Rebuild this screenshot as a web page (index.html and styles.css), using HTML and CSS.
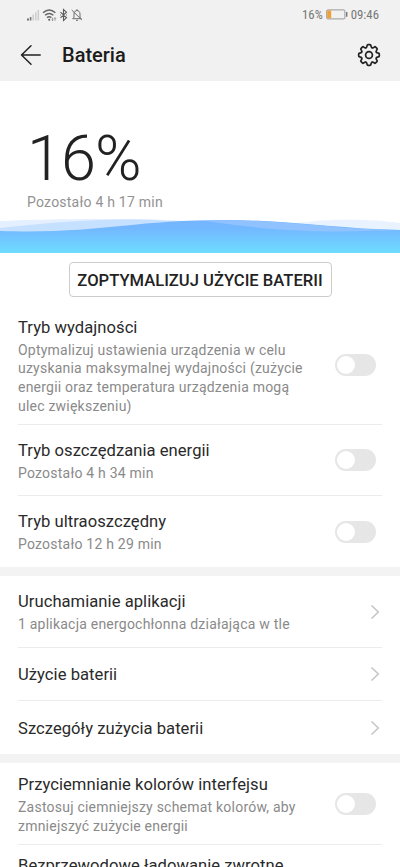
FILE: index.html
```html
<!DOCTYPE html>
<html lang="pl">
<head>
<meta charset="utf-8">
<title>Bateria</title>
<link rel="stylesheet" href="styles.css">
</head>
<body>
<header class="top">
  <div class="status">
    <svg class="status-icons" width="60" height="14" viewBox="0 0 60 14" fill="none">
      <path d="M2 10.500v2" stroke="#555" stroke-width="1.600"/>
      <path d="M4.600 9v3.500" stroke="#777" stroke-width="1.600"/>
      <path d="M7.200 6.500v6M9.800 4.300v8.200M12.300 2v10.500" stroke="#ccc" stroke-width="1.500"/>
      <path d="M17 4.700q6.200-5.600 12.400 0M19 7.200q4.200-3.500 8.400 0M21 9.600q2.200-1.700 4.400 0" stroke="#666" stroke-width="1.400"/>
      <circle cx="23.200" cy="11.700" r="1" fill="#555"/><path d="M26.500 9.700v3m-1-1l1 1 1-1M29 12.700v-3m-1 1l1-1 1 1" stroke="#777" stroke-width=".7"/>
      <path d="M34.500 4.200l6 5.600-3 2.700V1.500l3 2.700-6 5.600M34 7h.8M40 7h.8" stroke="#5c5c5c" stroke-width="1.100"/>
      <path d="M46.700 10.700h8.500l-1.200-1.500V6c0-4.600-6-4.600-6 0v3.200zM50 12.300h2M51 1.200v1.300M45.700 2l10.200 10" stroke="#6c6c6c" stroke-width="1"/>
    </svg>
    <div class="status-right">
      <span class="pct">16%</span>
      <svg class="batt" width="22" height="11" viewBox="0 0 22 11"><rect x=".7" y=".9" width="18.200" height="9" rx="1" fill="none" stroke="#999"/><rect x="1.200" y="1.400" width="4" height="8" fill="#eea13a"/><path d="M20.700 3v4.800" stroke="#777" stroke-width="1.400"/></svg>
      <span class="clock">09:46</span>
    </div>
  </div>
  <div class="bar">
    <svg width="22" height="22" viewBox="0 0 22 22" fill="none" stroke="#222" stroke-width="1.500" stroke-linecap="round" stroke-linejoin="round"><path d="M11 1.700L1.500 11l9.500 9.300M1.500 11h18.700"/></svg>
    <h1>Bateria</h1>
    <svg class="gear" width="24" height="24" viewBox="-12 -12 24 24" fill="none" stroke="#222" stroke-width="1.700" stroke-linecap="round">
      <defs><path id="tooth" d="M-3.020-7.300C-2.100-7.600-2-8.300-1.900-9.300Q-1.800-10.300-.9-10.300H.9Q1.800-10.300 1.900-9.300C2-8.300 2.100-7.600 3.020-7.300"/></defs>
      <use href="#tooth"/><use href="#tooth" transform="rotate(45)"/><use href="#tooth" transform="rotate(90)"/><use href="#tooth" transform="rotate(135)"/><use href="#tooth" transform="rotate(180)"/><use href="#tooth" transform="rotate(225)"/><use href="#tooth" transform="rotate(270)"/><use href="#tooth" transform="rotate(315)"/>
      <circle r="3.400"/>
    </svg>
  </div>
</header>
<section class="hero">
  <div class="level">16%</div>
  <div class="remaining">Pozostało 4 h 17 min</div>
  <svg class="wave" width="400" height="38" viewBox="0 0 400 38">
    <defs><linearGradient id="sea" x1="0" y1="4" x2="0" y2="38" gradientUnits="userSpaceOnUse"><stop offset="0" stop-color="#76b3fe"/><stop offset=".3" stop-color="#72b9ff"/><stop offset="1" stop-color="#6edcfe"/></linearGradient></defs>
    <path d="M0 6C50 4 85 4 120 4C160 4 185 6 200 7L180 16H0z" fill="#e4f0ff"/>
    <path d="M270 13C310 3 365 3 400 8V20H270z" fill="#e9f3ff"/>
    <path d="M0 13C45 8 90 4 135 4.500C155 4.500 175 6 195 7V20H0z" fill="#c6e0ff"/>
    <path d="M0 16C100 19 130 5 225 5C290 5 340 14 400 15V38H0z" fill="url(#sea)"/>
    <path d="M205 6C225 4.500 250 5 290 8C330 11 360 15 400 15C300 19 265 14 205 6z" fill="#8fc2ff"/>
  </svg>
</section>
<div class="action"><button>ZOPTYMALIZUJ UŻYCIE BATERII</button></div>
<main>
  <section class="group">
    <div class="row r1"><div class="text"><h2>Tryb wydajności</h2><p>Optymalizuj ustawienia urządzenia w celu<br>uzyskania maksymalnej wydajności (zużycie<br>energii oraz temperatura urządzenia mogą<br>ulec zwiększeniu)</p></div><i class="switch"></i></div>
    <div class="row r2"><div class="text"><h2>Tryb oszczędzania energii</h2><p>Pozostało 4 h 34 min</p></div><i class="switch"></i></div>
    <div class="row r3"><div class="text"><h2>Tryb ultraoszczędny</h2><p>Pozostało 12 h 29 min</p></div><i class="switch"></i></div>
  </section>
  <section class="group">
    <div class="row r4"><div class="text"><h2>Uruchamianie aplikacji</h2><p>1 aplikacja energochłonna działająca w tle</p></div><svg class="chev" width="10" height="16" viewBox="0 0 10 16"><path d="M1.500 1.500L8.300 8l-6.800 6.500"/></svg></div>
    <div class="row r5"><div class="text"><h2>Użycie baterii</h2></div><svg class="chev" width="10" height="16" viewBox="0 0 10 16"><path d="M1.500 1.500L8.300 8l-6.800 6.500"/></svg></div>
    <div class="row r6"><div class="text"><h2>Szczegóły zużycia baterii</h2></div><svg class="chev" width="10" height="16" viewBox="0 0 10 16"><path d="M1.500 1.500L8.300 8l-6.800 6.500"/></svg></div>
  </section>
  <section class="group">
    <div class="row r7"><div class="text"><h2>Przyciemnianie kolorów interfejsu</h2><p>Zastosuj ciemniejszy schemat kolorów, aby<br>zmniejszyć zużycie energii</p></div><i class="switch"></i></div>
    <div class="row r8"><div class="text"><h2>Bezprzewodowe ładowanie zwrotne</h2></div></div>
  </section>
</main>
</body>
</html>
```
FILE: styles.css
```css
* { box-sizing: border-box; }
body { margin: 0; height: 867px; overflow: hidden; background: #fff; font-family: Roboto, sans-serif; color: #2a2a2a; }
h1, h2, p { margin: 0; font-weight: 400; }
svg { display: block; flex: none; }
.top { height: 81px; background: #f1f1f1; }
.status { height: 28px; padding: 1px 21px 0 26px; display: flex; align-items: center; justify-content: space-between; }
.status-right { display: flex; align-items: center; font-family: "Roboto Condensed", Roboto, sans-serif; font-size: 12.8px; color: #777; }
.batt { margin: 0 3px 0 3px; }
.bar { height: 53px; padding: 0 19px 0 20px; display: flex; align-items: center; }
.bar h1 { margin-left: 20px; padding-top: 1px; font-size: 20px; line-height: 24px; font-weight: 500; color: #1c1c1c; }
.gear { margin-left: auto; }
.hero { height: 172px; display: flex; flex-direction: column; }
.level { margin: 45px 0 0 27px; height: 66px; line-height: 66px; font-size: 63px; font-weight: 300; color: #222; letter-spacing: -.9px; }
.remaining { margin-left: 27px; height: 20px; line-height: 20px; font-size: 14px; letter-spacing: .23px; color: #929292; }
.wave { margin-top: auto; }
.action { display: flex; justify-content: center; padding-top: 9px; }
button { width: 263px; height: 35px; padding: 2px 0 0; border: 1px solid #ccc; border-radius: 4px; background: #fff; font: 500 16.6px/31px Roboto, sans-serif; color: #222; white-space: nowrap; }
.group + .group { border-top: 9px solid #f3f3f3; }
.row { margin: 0 18px; display: flex; align-items: center; justify-content: space-between; border-bottom: 1px solid #ececec; }
.row:last-child { border-bottom: 0; }
.text { white-space: nowrap; }
h2 { font-size: 16.6px; line-height: 24px; letter-spacing: .04px; }
p { padding-top: 1px; margin-bottom: -1px; font-size: 14px; line-height: 18.6px; letter-spacing: .22px; color: #8a8a8a; }
.r1 { height: 128px; }
.r1 .text, .r1 .switch { margin-top: 9px; }
.r2 { height: 71px; }
.r3 { height: 71px; }
.r4 { height: 72px; }
.r5 { height: 53px; }
.r5 .text { padding-top: 1px; }
.r6 .text { padding-top: 2px; }
.r6 { height: 53px; }
.r7 { height: 82px; }
.r8 { height: 54px; align-items: flex-start; padding-top: 9px; }
.switch { flex: none; width: 41px; height: 22px; margin-right: 6px; border-radius: 11px; background: #e6e6e6; padding: 2px; }
.switch::before { content: ""; display: block; width: 18px; height: 18px; border-radius: 50%; background: #fff; }
.chev { margin-right: 2px; fill: none; stroke: #c4c4c4; stroke-width: 1.5; }
```
